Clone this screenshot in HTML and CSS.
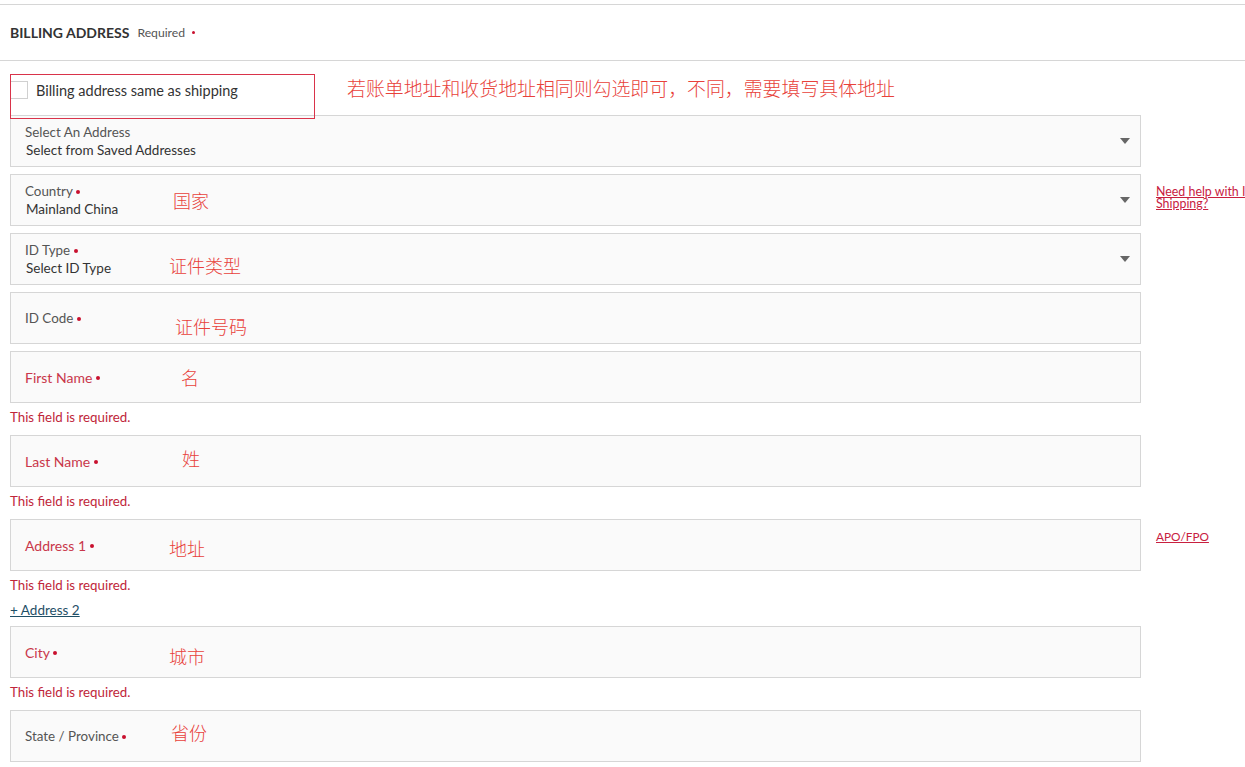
FILE: index.html
```html
<!DOCTYPE html>
<html lang="en">
<head>
<meta charset="utf-8">
<title>Billing Address</title>
<link rel="stylesheet" href="styles.css">
</head>
<body>
<div class="page">
  <div class="section-head">
    <span class="title">BILLING ADDRESS</span>
    <span class="req">Required</span>
    <span class="dot"></span>
  </div>

  <div class="same-row">
    <label class="check"><span class="box"></span><span class="check-text">Billing address same as shipping</span></label>
    <span class="note-box"></span>
    <span class="note note-top">若账单地址和收货地址相同则勾选即可，不同，需要填写具体地址</span>
  </div>

  <div class="form">
    <div class="row">
      <div class="field select">
        <div class="field-body">
          <div class="label">Select An Address</div>
          <div class="value">Select from Saved Addresses</div>
        </div>
        <span class="caret"></span>
      </div>
      <div class="aside"></div>
    </div>

    <div class="row">
      <div class="field select">
        <div class="field-body">
          <div class="label">Country <span class="rdot"></span></div>
          <div class="value">Mainland China</div>
        </div>
        <span class="caret"></span>
        <span class="note n-country">国家</span>
      </div>
      <div class="aside"><a class="link" href="#">Need help with International Shipping?</a></div>
    </div>

    <div class="row">
      <div class="field select">
        <div class="field-body">
          <div class="label">ID Type <span class="rdot"></span></div>
          <div class="value">Select ID Type</div>
        </div>
        <span class="caret"></span>
        <span class="note n-idtype">证件类型</span>
      </div>
      <div class="aside"></div>
    </div>

    <div class="row">
      <div class="field single">
        <div class="label">ID Code <span class="rdot"></span></div>
        <span class="note n-idcode">证件号码</span>
      </div>
      <div class="aside"></div>
    </div>

    <div class="row has-error">
      <div class="field single error">
        <div class="label">First Name <span class="rdot"></span></div>
        <span class="note n-first">名</span>
      </div>
      <div class="aside"></div>
      <div class="err">This field is required.</div>
    </div>

    <div class="row has-error">
      <div class="field single error">
        <div class="label">Last Name <span class="rdot"></span></div>
        <span class="note n-last">姓</span>
      </div>
      <div class="aside"></div>
      <div class="err">This field is required.</div>
    </div>

    <div class="row has-error">
      <div class="field single error">
        <div class="label">Address 1 <span class="rdot"></span></div>
        <span class="note n-addr">地址</span>
      </div>
      <div class="aside"><a class="link link-apo" href="#">APO/FPO</a></div>
      <div class="err">This field is required.</div>
      <div class="add-line"><a class="add-link" href="#">+ Address 2</a></div>
    </div>

    <div class="row has-error">
      <div class="field single error">
        <div class="label">City <span class="rdot"></span></div>
        <span class="note n-city">城市</span>
      </div>
      <div class="aside"></div>
      <div class="err">This field is required.</div>
    </div>

    <div class="row">
      <div class="field single">
        <div class="label">State / Province <span class="rdot"></span></div>
        <span class="note n-state">省份</span>
      </div>
      <div class="aside"></div>
    </div>
  </div>
</div>
</body>
</html>
```

FILE: styles.css
```css
html, body {
  margin: 0;
  padding: 0;
  background: #fff;
  overflow: hidden;
}
body {
  font-family: Lato, "Open Sans", "Noto Sans CJK SC", sans-serif;
  color: #333;
}
.page {
  width: 1320px;
  padding-top: 4px;
}
.section-head {
  border-top: 1px solid #d6d6d6;
  border-bottom: 1px solid #d6d6d6;
  height: 55px;
  display: flex;
  align-items: center;
  padding-left: 10px;
  width: 1235px;
}
.title {
  font-size: 14px;
  font-weight: 700;
  color: #333;
}
.req {
  font-size: 12.2px;
  color: #555;
  margin-left: 8px;
}
.dot {
  width: 3px;
  height: 3px;
  background: #c8102e;
  border-radius: 50%;
  margin-left: 7px;
}
.same-row {
  position: relative;
  height: 54px;
}
.check {
  position: absolute;
  left: 10px;
  top: 20px;
  display: flex;
  align-items: center;
}
.box {
  width: 18px;
  height: 18px;
  border: 1px solid #d0d0d0;
  box-sizing: border-box;
  background: #fff;
}
.check-text {
  font-size: 14.5px;
  color: #333;
  margin-left: 8px;
}
.note-box {
  position: absolute;
  left: 10px;
  top: 13px;
  width: 305px;
  height: 45px;
  border: 1px solid #d9334a;
  box-sizing: border-box;
  z-index: 2;
}
.note {
  position: absolute;
  font-family: "Noto Sans CJK SC", sans-serif;
  font-weight: 300;
  color: #e8413a;
  font-size: 18px;
  line-height: 20px;
  white-space: nowrap;
}
.note-top {
  left: 347px;
  top: 17px;
  font-size: 18.9px;
}
.form {
  display: flex;
  flex-direction: column;
  gap: 7px;
  padding-left: 10px;
}
.row {
  display: grid;
  grid-template-columns: 1131px 160px;
  column-gap: 15px;
}
.field {
  position: relative;
  height: 52px;
  box-sizing: border-box;
  border: 1px solid #d6d6d6;
  background: #fafafa;
  display: flex;
  align-items: center;
  padding-left: 14px;
  padding-right: 10px;
}
.field.select {
  align-items: flex-start;
  padding-top: 8px;
}
.field-body {
  flex: 1;
}
.label {
  font-size: 13.4px;
  line-height: 17px;
  color: #555;
}
.value {
  font-size: 13.5px;
  line-height: 19px;
  color: #333;
  margin-left: 1px;
}
.single .label {
  margin-top: 1px;
}
.rdot {
  display: inline-block;
  width: 4px;
  height: 4px;
  border-radius: 50%;
  background: #c8102e;
  vertical-align: middle;
  margin-left: 0;
  position: relative;
  top: -1px;
}
.error .label {
  color: #c9374a;
  font-size: 14px;
  margin-top: 1px;
}
.caret {
  align-self: center;
  width: 0;
  height: 0;
  border-left: 5px solid transparent;
  border-right: 5px solid transparent;
  border-top: 6px solid #666;
  margin-top: -8px;
}
.aside {
  padding-top: 12px;
}
.link {
  font-size: 12.4px;
  line-height: 12px;
  color: #c8203f;
  text-decoration: underline;
  display: block;
  width: 170px;
}
.link-apo {
  font-size: 11.8px;
}
.err {
  grid-column: 1 / -1;
  height: 25px;
  font-size: 13.3px;
  line-height: 16px;
  padding-top: 6px;
  box-sizing: border-box;
  color: #c0263a;
}
.add-line {
  grid-column: 1 / -1;
  height: 23px;
  font-size: 13.5px;
  line-height: 16px;
  padding-top: 6px;
  box-sizing: border-box;
}
.add-link {
  color: #1f4f66;
  text-decoration: underline;
}
.n-country { left: 162px; top: 15px; }
.n-idtype { left: 158px; top: 21px; }
.n-idcode { left: 164px; top: 23px; }
.n-first { left: 170px; top: 15px; }
.n-last { left: 171px; top: 12px; }
.n-addr { left: 158px; top: 18px; }
.n-city { left: 158px; top: 19px; }
.n-state { left: 160px; top: 11px; }
```
